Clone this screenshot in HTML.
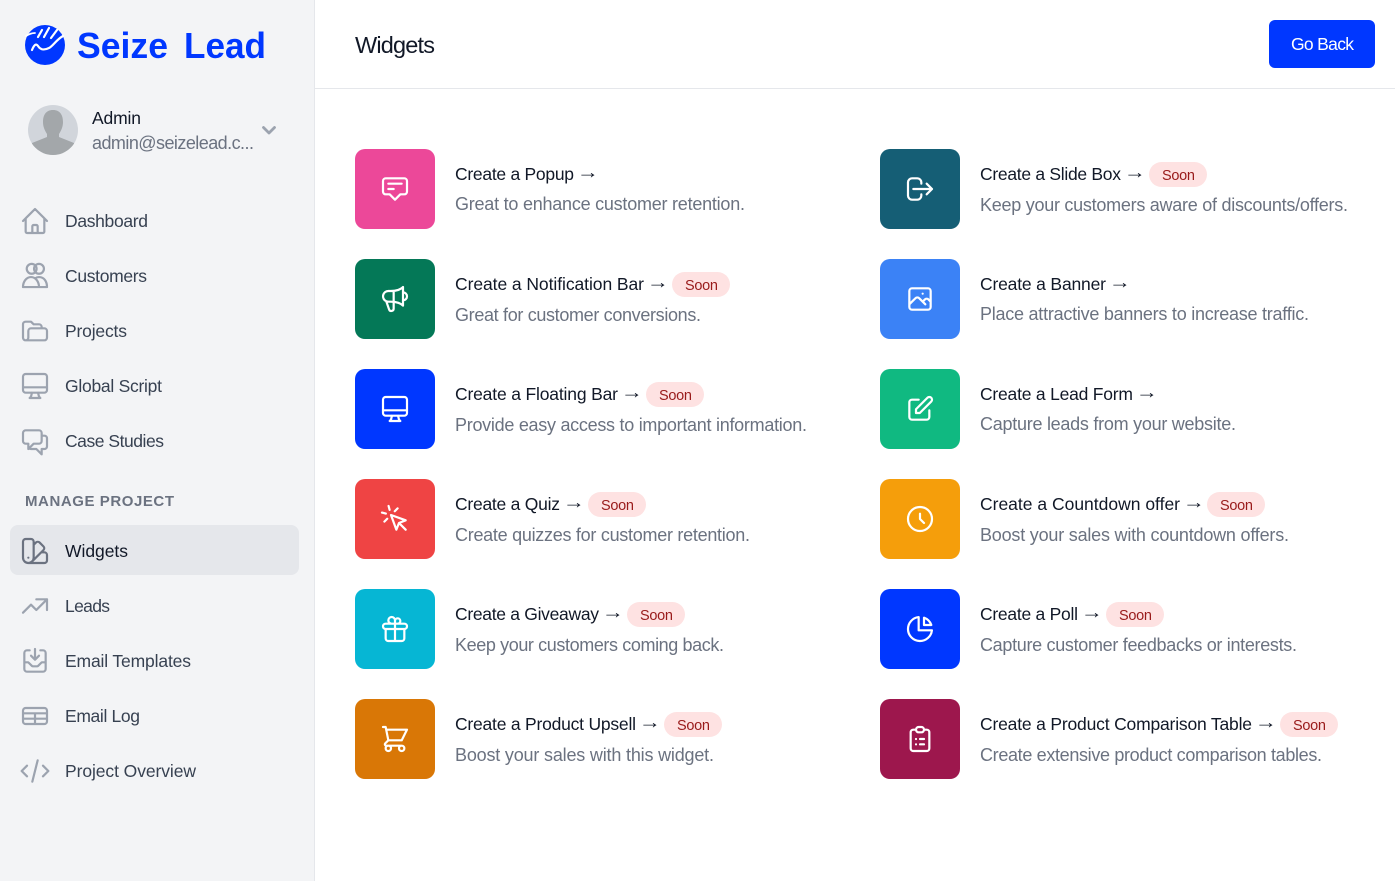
<!DOCTYPE html>
<html lang="en"><head><meta charset="utf-8"><title>Widgets</title>
<style>
html,body{margin:0;padding:0;background:#fff}
body{width:1395px;height:881px;position:relative;overflow:hidden;font-family:"Liberation Sans",sans-serif}
.side{position:absolute;left:0;top:0;width:314px;height:881px;background:#f3f4f6;border-right:1px solid #e5e7eb}
.head{position:absolute;left:315px;top:88px;width:1080px;height:1px;background:#e5e7eb}
.btn{position:absolute;left:1269px;top:20px;width:106px;height:48px;background:#0037ff;border-radius:6px}
.act{position:absolute;left:10px;top:525px;width:289px;height:50px;background:#e5e7eb;border-radius:8px}
.ava{position:absolute;left:28px;top:105px;width:50px;height:50px;border-radius:50%;overflow:hidden;background:#d1d5db}
.tile{position:absolute;width:80px;height:80px;border-radius:10px}
.soon{position:absolute;width:58px;height:25px;border-radius:13px;background:#fee2e2}
svg.i{position:absolute;width:32px;height:32px;fill:none;stroke-width:1.65;stroke-linecap:round;stroke-linejoin:round}
.tile svg.i{left:24px;top:24px;stroke:#fff}
.n{stroke:#9ca3af}
#t{position:absolute;left:0;top:0;font-family:"Liberation Sans",sans-serif;font-size:18px}
.a{fill:#111827;font-size:17.5px}.d{fill:#6b7280}.l{fill:#374151;font-size:17.5px}.s{fill:#991b1b;font-size:14.5px}
.r{fill:#111827;font-size:18px}
</style></head><body>
<div class="side"></div><div class="head"></div><div class="btn"></div><div class="act"></div>

<svg style="position:absolute;left:25px;top:25px" width="40" height="40" viewBox="0 0 40 40" fill="none" stroke="#fff" stroke-width="2.200" stroke-linecap="round">
<circle cx="20" cy="20" r="20" fill="#0037ff" stroke="none"/>
<path d="M7 25C9 20 11 18 13 21s5 5 11 2c4-2 7-8 14-12"/>
<path d="M17 5l-4 7M24 3l-5 9M32 5l-6 8"/>
<path d="M1 11c3-2 6-3 9-3" stroke-width="1.800"/>
</svg>

<div class="ava"><svg width="50" height="50" viewBox="0 0 50 50"><path fill="#a3a7aa" d="M25 5c7 0 10 5 10 12 0 5-2 9-4 12v3l15 6v12H4V38l15-6v-3c-2-3-4-7-4-12 0-7 3-12 10-12z"/></svg></div>
<svg style="position:absolute;left:259px;top:120px" width="20" height="20" viewBox="0 0 20 20" fill="none" stroke="#9ca3af" stroke-width="2.800" stroke-linecap="round" stroke-linejoin="round"><path d="M4.500 7.500L10 13l5.500-5.500"/></svg>

<svg class="i n" style="left:19px;top:205px" viewBox="0 0 24 24"><path d="M3 12l2-2m0 0l7-7 7 7M5 10v10a1 1 0 001 1h3m10-11l2 2m-2-2v10a1 1 0 01-1 1h-3m-6 0a1 1 0 001-1v-4a1 1 0 011-1h2a1 1 0 011 1v4a1 1 0 001 1m-6 0h6"/></svg>
<svg class="i n" style="left:19px;top:260px" viewBox="0 0 24 24"><circle cx="9.500" cy="6.600" r="3.700"/><circle cx="15" cy="6.600" r="3.700"/><path d="M3 20.300c0-4 2.500-7.500 6-7.500s6 3.500 6 7.500zM15 20.300h6c0-4-2-7.500-6-7.500-1 0-2 .3-3 1"/></svg>
<svg class="i n" style="left:19px;top:315px" viewBox="0 0 24 24"><path d="M5 19a2 2 0 01-2-2V7a2 2 0 012-2h4l2 2h4a2 2 0 012 2v1M5 19h14a2 2 0 002-2v-5a2 2 0 00-2-2H9a2 2 0 00-2 2v5a2 2 0 01-2 2z"/></svg>
<svg class="i n" style="left:19px;top:370px" viewBox="0 0 24 24"><path d="M9.750 17L9 20l-1 1h8l-1-1-.75-3M3 13h18M5 17h14a2 2 0 002-2V5a2 2 0 00-2-2H5a2 2 0 00-2 2v10a2 2 0 002 2z"/></svg>
<svg class="i n" style="left:19px;top:425px" viewBox="0 0 24 24"><path d="M17 8h2a2 2 0 012 2v6a2 2 0 01-2 2h-2v4l-4-4H9a1.994 1.994 0 01-1.414-.586m0 0L11 14h4a2 2 0 002-2V6a2 2 0 00-2-2H5a2 2 0 00-2 2v6a2 2 0 002 2h2v4l.586-.586z"/></svg>
<svg class="i" style="left:19px;top:535px;stroke:#6b7280" viewBox="0 0 24 24"><path d="M7 21a4 4 0 01-4-4V5a2 2 0 012-2h4a2 2 0 012 2v12a4 4 0 01-4 4zm0 0h12a2 2 0 002-2v-4a2 2 0 00-2-2h-2.343M11 7.343l1.657-1.657a2 2 0 012.828 0l2.829 2.829a2 2 0 010 2.828l-8.486 8.485M7 17h.01"/></svg>
<svg class="i n" style="left:19px;top:590px" viewBox="0 0 24 24"><path d="M13 7h8m0 0v8m0-8l-8 8-4-4-6 6"/></svg>
<svg class="i n" style="left:19px;top:645px" viewBox="0 0 24 24"><path d="M8 4H6a2 2 0 00-2 2v12a2 2 0 002 2h12a2 2 0 002-2V6a2 2 0 00-2-2h-2m-4-1v8m0 0l3-3m-3 3L9 8m-5 5h2.586a1 1 0 01.707.293l2.414 2.414a1 1 0 00.707.293h3.172a1 1 0 00.707-.293l2.414-2.414a1 1 0 01.707-.293H20"/></svg>
<svg class="i n" style="left:19px;top:700px" viewBox="0 0 24 24"><path d="M3 10h18M3 14h18m-9-4v8m-7 0h14a2 2 0 002-2V8a2 2 0 00-2-2H5a2 2 0 00-2 2v8a2 2 0 002 2z"/></svg>
<svg class="i n" style="left:19px;top:755px" viewBox="0 0 24 24"><path d="M10 20l4-16m4 4l4 4-4 4M6 16l-4-4 4-4"/></svg>

<div class="tile" style="left:355px;top:149px;background:#ec4899"><svg class="i" viewBox="0 0 24 24"><path d="M7 8h10M7 12h4m1 8l-4-4H5a2 2 0 01-2-2V6a2 2 0 012-2h14a2 2 0 012 2v8a2 2 0 01-2 2h-3l-4 4z"/></svg></div>
<div class="tile" style="left:355px;top:259px;background:#047857"><svg class="i" viewBox="0 0 24 24"><path d="M11 5.882V19.240a1.760 1.760 0 01-3.417.592l-2.147-6.150M18 13a3 3 0 100-6M5.436 13.683A4.001 4.001 0 017 6h1.832c4.100 0 7.625-1.234 9.168-3v14c-1.543-1.766-5.067-3-9.168-3H7a3.988 3.988 0 01-1.564-.317z"/></svg></div>
<div class="tile" style="left:355px;top:369px;background:#0037ff"><svg class="i" viewBox="0 0 24 24"><path d="M9.750 17L9 20l-1 1h8l-1-1-.75-3M3 13h18M5 17h14a2 2 0 002-2V5a2 2 0 00-2-2H5a2 2 0 00-2 2v10a2 2 0 002 2z"/></svg></div>
<div class="tile" style="left:355px;top:479px;background:#ef4444"><svg class="i" viewBox="0 0 24 24"><path d="M15 15l-2 5L9 9l11 4-5 2zm0 0l5 5M7.188 2.239l.777 2.897M5.136 7.965l-2.898-.777M13.950 4.050l-2.122 2.122m-5.657 5.656l-2.120 2.122"/></svg></div>
<div class="tile" style="left:355px;top:589px;background:#06b6d4"><svg class="i" viewBox="0 0 24 24"><path d="M12 8v13m0-13V6a2 2 0 112 2h-2zm0 0V5.500A2.500 2.500 0 109.500 8H12zm-7 4h14M5 12a2 2 0 110-4h14a2 2 0 110 4M5 12v7a2 2 0 002 2h10a2 2 0 002-2v-7"/></svg></div>
<div class="tile" style="left:355px;top:699px;background:#d97706"><svg class="i" viewBox="0 0 24 24"><path d="M3 3h2l.4 2M7 13h10l4-8H5.400M7 13L5.400 5M7 13l-2.293 2.293c-.63.63-.184 1.707.707 1.707H17m0 0a2 2 0 100 4 2 2 0 000-4zm-8 2a2 2 0 11-4 0 2 2 0 014 0z"/></svg></div>
<div class="tile" style="left:880px;top:149px;background:#155e75"><svg class="i" viewBox="0 0 24 24"><path d="M17 16l4-4m0 0l-4-4m4 4H7m6 4v1a3 3 0 01-3 3H6a3 3 0 01-3-3V7a3 3 0 013-3h4a3 3 0 013 3v1"/></svg></div>
<div class="tile" style="left:880px;top:259px;background:#3b82f6"><svg class="i" viewBox="0 0 24 24"><path d="M4 16l4.586-4.586a2 2 0 012.828 0L16 16m-2-2l1.586-1.586a2 2 0 012.828 0L20 14m-6-6h.01M6 20h12a2 2 0 002-2V6a2 2 0 00-2-2H6a2 2 0 00-2 2v12a2 2 0 002 2z"/></svg></div>
<div class="tile" style="left:880px;top:369px;background:#10b981"><svg class="i" viewBox="0 0 24 24"><path d="M11 5H6a2 2 0 00-2 2v11a2 2 0 002 2h11a2 2 0 002-2v-5m-1.414-9.414a2 2 0 112.828 2.828L11.828 15H9v-2.828l8.586-8.586z"/></svg></div>
<div class="tile" style="left:880px;top:479px;background:#f59e0b"><svg class="i" viewBox="0 0 24 24"><path d="M12 8v4l3 3m6-3a9 9 0 11-18 0 9 9 0 0118 0z"/></svg></div>
<div class="tile" style="left:880px;top:589px;background:#0037ff"><svg class="i" viewBox="0 0 24 24"><path d="M11 3.055A9.001 9.001 0 1020.945 13H11V3.055z"/><path d="M20.488 9H15V3.512A9.025 9.025 0 0120.488 9z"/></svg></div>
<div class="tile" style="left:880px;top:699px;background:#9d174d"><svg class="i" viewBox="0 0 24 24"><path d="M9 5H7a2 2 0 00-2 2v12a2 2 0 002 2h10a2 2 0 002-2V7a2 2 0 00-2-2h-2M9 5a2 2 0 002 2h2a2 2 0 002-2M9 5a2 2 0 012-2h2a2 2 0 012 2m-3 7h3m-3 4h3m-6-4h.01M9 16h.01"/></svg></div>

<div class="soon" style="left:672px;top:272px"></div>
<div class="soon" style="left:646px;top:382px"></div>
<div class="soon" style="left:588px;top:492px"></div>
<div class="soon" style="left:627px;top:602px"></div>
<div class="soon" style="left:664px;top:712px"></div>
<div class="soon" style="left:1149px;top:162px"></div>
<div class="soon" style="left:1207px;top:492px"></div>
<div class="soon" style="left:1106px;top:602px"></div>
<div class="soon" style="left:1280px;top:712px"></div>

<svg id="t" width="1395" height="881" viewBox="0 0 1395 881">
<text x="77" y="58" textLength="91" lengthAdjust="spacingAndGlyphs" font-size="36" font-weight="700" fill="#0037ff">Seize</text>
<text x="184" y="58" textLength="82" lengthAdjust="spacingAndGlyphs" font-size="36" font-weight="700" fill="#0037ff">Lead</text>
<text x="92" y="124" textLength="49" class="a">Admin</text>
<text x="92" y="149" textLength="162" class="d">admin@seizelead.c...</text>
<text x="65" y="227" textLength="83" class="l">Dashboard</text>
<text x="65" y="282" textLength="82" class="l">Customers</text>
<text x="65" y="337" textLength="62" class="l">Projects</text>
<text x="65" y="392" textLength="97" class="l">Global Script</text>
<text x="65" y="447" textLength="99" class="l">Case Studies</text>
<text x="25" y="506" textLength="149" font-size="15" font-weight="700" fill="#6b7280">MANAGE PROJECT</text>
<text x="65" y="557" textLength="63" class="a">Widgets</text>
<text x="65" y="612" textLength="45" class="l">Leads</text>
<text x="65" y="667" textLength="126" class="l">Email Templates</text>
<text x="65" y="722" textLength="75" class="l">Email Log</text>
<text x="65" y="777" textLength="131" class="l">Project Overview</text>
<text x="355" y="53" textLength="80" style="font-size:23.5px" class="a">Widgets</text>
<text x="1291" y="50" textLength="63" fill="#fff" font-size="17.5">Go Back</text>

<text x="455" y="180" textLength="119" class="a">Create a Popup</text><text x="577" y="178" class="r" textLength="22" lengthAdjust="spacingAndGlyphs">→</text>
<text x="455" y="210" textLength="290" class="d">Great to enhance customer retention.</text>
<text x="455" y="290" textLength="189" class="a">Create a Notification Bar</text><text x="647" y="288" class="r" textLength="22" lengthAdjust="spacingAndGlyphs">→</text>
<text x="685" y="290" textLength="33" class="s">Soon</text>
<text x="455" y="321" textLength="246" class="d">Great for customer conversions.</text>
<text x="455" y="400" textLength="163" class="a">Create a Floating Bar</text><text x="621" y="398" class="r" textLength="22" lengthAdjust="spacingAndGlyphs">→</text>
<text x="659" y="400" textLength="33" class="s">Soon</text>
<text x="455" y="431" textLength="352" class="d">Provide easy access to important information.</text>
<text x="455" y="510" textLength="105" class="a">Create a Quiz</text><text x="563" y="508" class="r" textLength="22" lengthAdjust="spacingAndGlyphs">→</text>
<text x="601" y="510" textLength="33" class="s">Soon</text>
<text x="455" y="541" textLength="295" class="d">Create quizzes for customer retention.</text>
<text x="455" y="620" textLength="144" class="a">Create a Giveaway</text><text x="602" y="618" class="r" textLength="22" lengthAdjust="spacingAndGlyphs">→</text>
<text x="640" y="620" textLength="33" class="s">Soon</text>
<text x="455" y="651" textLength="269" class="d">Keep your customers coming back.</text>
<text x="455" y="730" textLength="181" class="a">Create a Product Upsell</text><text x="639" y="728" class="r" textLength="22" lengthAdjust="spacingAndGlyphs">→</text>
<text x="677" y="730" textLength="33" class="s">Soon</text>
<text x="455" y="761" textLength="259" class="d">Boost your sales with this widget.</text>

<text x="980" y="180" textLength="141" class="a">Create a Slide Box</text><text x="1124" y="178" class="r" textLength="22" lengthAdjust="spacingAndGlyphs">→</text>
<text x="1162" y="180" textLength="33" class="s">Soon</text>
<text x="980" y="211" textLength="368" class="d">Keep your customers aware of discounts/offers.</text>
<text x="980" y="290" textLength="126" class="a">Create a Banner</text><text x="1109" y="288" class="r" textLength="22" lengthAdjust="spacingAndGlyphs">→</text>
<text x="980" y="320" textLength="329" class="d">Place attractive banners to increase traffic.</text>
<text x="980" y="400" textLength="153" class="a">Create a Lead Form</text><text x="1136" y="398" class="r" textLength="22" lengthAdjust="spacingAndGlyphs">→</text>
<text x="980" y="430" textLength="256" class="d">Capture leads from your website.</text>
<text x="980" y="510" textLength="200" class="a">Create a Countdown offer</text><text x="1183" y="508" class="r" textLength="22" lengthAdjust="spacingAndGlyphs">→</text>
<text x="1220" y="510" textLength="33" class="s">Soon</text>
<text x="980" y="541" textLength="309" class="d">Boost your sales with countdown offers.</text>
<text x="980" y="620" textLength="98" class="a">Create a Poll</text><text x="1081" y="618" class="r" textLength="22" lengthAdjust="spacingAndGlyphs">→</text>
<text x="1119" y="620" textLength="33" class="s">Soon</text>
<text x="980" y="651" textLength="317" class="d">Capture customer feedbacks or interests.</text>
<text x="980" y="730" textLength="272" class="a">Create a Product Comparison Table</text><text x="1255" y="728" class="r" textLength="22" lengthAdjust="spacingAndGlyphs">→</text>
<text x="1293" y="730" textLength="33" class="s">Soon</text>
<text x="980" y="761" textLength="342" class="d">Create extensive product comparison tables.</text>
</svg>
</body></html>
